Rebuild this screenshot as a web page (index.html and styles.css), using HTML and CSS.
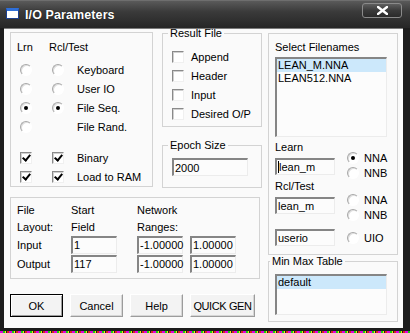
FILE: index.html
```html
<!DOCTYPE html>
<html lang="en">
<head>
    <meta charset="UTF-8">
    <title>I/O Parameters</title>
    <link rel="stylesheet" href="styles.css">
</head>
<body>
<div class="window">
    <div class="titlebar">
        <span class="app-icon"></span>
        <span class="title">I/O Parameters</span>
        <span class="close-btn">
            <svg width="11" height="9" viewBox="0 0 11 9"><path d="M1 1 L10 8 M10 1 L1 8" stroke="#fff" stroke-width="2.4" stroke-linecap="square"/></svg>
        </span>
    </div>

    <div class="client">
        <div class="left-col">
            <div class="top-area">
                <div class="group lrn-group">
                    <span>Lrn</span><span>Rcl/Test</span><span></span>

                    <span class="radio"></span><span class="radio"></span><span>Keyboard</span>
                    <span class="radio"></span><span class="radio"></span><span>User IO</span>
                    <span class="radio on"></span><span class="radio on"></span><span>File Seq.</span>
                    <span class="radio"></span><span></span><span>File Rand.</span>

                    <span class="spacer"></span>

                    <span class="check on"></span><span class="check on"></span><span>Binary</span>
                    <span class="check on"></span><span class="check on"></span><span>Load to RAM</span>
                </div>

                <div class="result-col">
                    <fieldset class="result-file">
                        <legend>Result File</legend>
                        <div class="opt"><span class="check"></span>Append</div>
                        <div class="opt"><span class="check"></span>Header</div>
                        <div class="opt"><span class="check"></span>Input</div>
                        <div class="opt"><span class="check"></span>Desired O/P</div>
                    </fieldset>
                    <fieldset class="epoch">
                        <legend>Epoch Size</legend>
                        <div class="field epoch-field">2000</div>
                    </fieldset>
                </div>
            </div>

            <div class="group layout-group">
                <span>File</span><span>Start</span><span>Network</span><span></span>
                <span>Layout:</span><span>Field</span><span>Ranges:</span><span></span>
                <span>Input</span>
                <div class="field">1</div>
                <div class="field">-1.00000</div>
                <div class="field">1.00000</div>
                <span>Output</span>
                <div class="field">117</div>
                <div class="field">-1.00000</div>
                <div class="field">1.00000</div>
            </div>

            <div class="buttons">
                <button class="btn default">OK</button>
                <button class="btn">Cancel</button>
                <button class="btn">Help</button>
                <button class="btn wide">QUICK GEN</button>
            </div>
        </div>

        <div class="right-col">
            <div class="group files-group">
                <div class="line">Select Filenames</div>
                <div class="listbox files-list">
                    <div class="item sel">LEAN_M.NNA</div>
                    <div class="item">LEAN512.NNA</div>
                </div>

                <div class="line pick-label">Learn</div>
                <div class="pick-row">
                    <div class="field name-field learn-field"><span class="caret"></span>lean_m</div>
                    <div class="pick-opts learn-opts">
                        <div class="pick"><span class="radio on"></span>NNA</div>
                        <div class="pick"><span class="radio"></span>NNB</div>
                    </div>
                </div>

                <div class="line">Rcl/Test</div>
                <div class="pick-row">
                    <div class="field name-field">lean_m</div>
                    <div class="pick-opts rcl-opts">
                        <div class="pick"><span class="radio"></span>NNA</div>
                        <div class="pick"><span class="radio"></span>NNB</div>
                    </div>
                </div>

                <div class="pick-row">
                    <div class="field name-field user-field">userio</div>
                    <div class="pick-opts uio-opts">
                        <div class="pick"><span class="radio"></span>UIO</div>
                    </div>
                </div>
            </div>

            <fieldset class="minmax">
                <legend>Min Max Table</legend>
                <div class="listbox minmax-list">
                    <div class="item sel">default</div>
                </div>
            </fieldset>
        </div>
    </div>
</div>
</body>
</html>
```

FILE: styles.css
```css
body {
    margin: 0;
    width: 410px;
    height: 333px;
    overflow: hidden;
    font-family: "Liberation Sans", Arial, sans-serif;
    font-size: 11px;
    color: #000;
    background: repeating-linear-gradient(90deg, #e000e0 0 3px, #10d010 3px 5px, #f0f000 5px 6px, #202020 6px 7px, #e02020 7px 9px);
}

.window {
    width: 410px;
    height: 331px;
    display: flex;
    flex-direction: column;
    background: #1c1c1c;
}

/* title bar */
.titlebar {
    height: 28px;
    flex: none;
    display: flex;
    align-items: flex-start;
    padding-left: 6px;
    box-sizing: border-box;
    background: linear-gradient(#5a5a5a, #3a3a3a 40%, #262626);
    border-top: 1px solid #6e6e6e;
}
.app-icon {
    width: 13px;
    height: 11px;
    margin-top: 7px;
    box-sizing: border-box;
    border: 1px solid #1b3f8f;
    border-top-width: 3px;
    border-top-color: #2f6fd8;
    background: #fff;
}
.title {
    margin: 7px 0 0 6px;
    color: #fff;
    font-weight: bold;
    font-size: 12.5px;
    letter-spacing: 0.1px;
    text-shadow: 0 0 1px #000;
}
.close-btn {
    margin: 2px 8px 0 auto;
    width: 40px;
    height: 15px;
    box-sizing: border-box;
    border: 1px solid #8a8a8a;
    border-radius: 3px;
    background: linear-gradient(#5e5e5e, #3a3a3a 50%, #2a2a2a);
    display: flex;
    align-items: center;
    justify-content: center;
}

/* client area */
.client {
    flex: 1;
    margin: 0 7px 3px 4px;
    padding-left: 6px;
    display: flex;
    gap: 6px;
    background: #fafafa;
    border-top: 1px solid #7a7a7a;
    box-sizing: border-box;
}
.left-col { width: 252px; }
.right-col { width: 130px; }

.group {
    border: 1px solid #d3d3d3;
}
fieldset {
    margin: 0;
    border: 1px solid #d3d3d3;
    min-width: 0;
}
legend {
    line-height: 12px;
    padding: 0 2px;
}

.top-area {
    display: flex;
    height: 159px;
}

/* Lrn / Rcl group */
.lrn-group {
    width: 143px;
    height: 155px;
    margin-top: 3px;
    box-sizing: border-box;
    padding-left: 6px;
    display: grid;
    grid-template-columns: 32px 28px 1fr;
    grid-template-rows: 27px repeat(4, 19px) 12px repeat(2, 19px);
    align-items: center;
}
.lrn-group .radio,
.lrn-group .check { margin-left: 3px; }
.lrn-group .spacer { grid-column: 1 / 4; }

.result-col {
    width: 100px;
    margin-left: 9px;
}
.result-file {
    margin-top: -2px;
    padding: 8px 0 3px 9px;
}
.result-file legend,
.epoch legend { margin-left: -4px; }
.opt {
    height: 19px;
    display: flex;
    align-items: center;
    gap: 7px;
}
.epoch {
    margin-top: 12px;
    padding: 7px 0 11px 9px;
}
.epoch-field { width: 76px; }

/* fields and lists */
.field {
    height: 18px;
    box-sizing: border-box;
    border-style: solid;
    border-width: 2px 1px 1px 2px;
    border-color: #858585 #ececec #ececec #858585;
    background: #fcfcfc;
    padding-left: 1px;
    display: flex;
    align-items: center;
    white-space: nowrap;
}
.caret {
    width: 1px;
    height: 12px;
    background: #000;
}
.listbox {
    box-sizing: border-box;
    border-style: solid;
    border-width: 2px 1px 1px 2px;
    border-color: #858585 #ececec #ececec #858585;
    background: #fcfcfc;
    width: 112px;
}
.item {
    height: 13px;
    line-height: 13px;
    padding-left: 1px;
}
.item.sel { background: #cce8fb; }

/* radios and checks */
.radio {
    width: 12px;
    height: 12px;
    box-sizing: border-box;
    border-radius: 50%;
    border: 1px solid;
    border-color: #a8a8a8 #fff #fff #a8a8a8;
    box-shadow: inset 1px 1px 0 #dedede;
    background: #fff;
    position: relative;
    flex: none;
}
.radio.on::after {
    content: "";
    position: absolute;
    left: 3px;
    top: 3px;
    width: 4px;
    height: 4px;
    border-radius: 50%;
    background: #000;
}
.check {
    width: 12px;
    height: 12px;
    box-sizing: border-box;
    border: 1px solid;
    border-color: #8a8a8a #f0f0f0 #f0f0f0 #8a8a8a;
    box-shadow: inset 1px 1px 0 #d0d0d0;
    background: #fff;
    position: relative;
    flex: none;
}
.check.on::after {
    content: "";
    position: absolute;
    left: 3px;
    top: 0;
    width: 3px;
    height: 6px;
    border: solid #000;
    border-width: 0 2px 2px 0;
    transform: rotate(40deg);
}

/* file layout group */
.layout-group {
    width: 250px;
    box-sizing: border-box;
    margin-top: 9px;
    padding: 3px 0 5px 6px;
    display: grid;
    grid-template-columns: 54px 66px 53px auto;
    grid-template-rows: 17px 17px 19px 19px;
    align-items: center;
}
.layout-group .field { width: 46px; }

/* buttons */
.buttons {
    display: flex;
    gap: 7px;
    margin-top: 15px;
}
.btn {
    width: 53px;
    height: 23px;
    padding: 0;
    box-sizing: border-box;
    font: inherit;
    color: #000;
    background: #f3f3f3;
    border: 1px solid;
    border-color: #fff #9c9c9c #9c9c9c #fff;
    box-shadow: inset -1px -1px 0 #d6d6d6;
    white-space: nowrap;
}
.btn.default {
    border-color: #000;
    box-shadow: inset 1px 1px 0 #fff, inset -1px -1px 0 #9c9c9c;
}
.btn.wide {
    width: 65px;
    letter-spacing: -0.4px;
}

/* filename group */
.files-group {
    margin-top: 4px;
    padding: 7px 0 8px 6px;
}
.line {
    height: 13px;
    line-height: 13px;
}
.files-list {
    height: 80px;
    margin-top: 3px;
}
.pick-label { margin-top: 4px; }
.pick-row {
    display: flex;
    align-items: flex-start;
}
.name-field {
    width: 60px;
    height: 17px;
    margin-top: 4px;
}
.user-field { margin-top: 7px; }
.pick-opts { margin-left: 12px; }
.learn-opts { margin-top: -4px; }
.rcl-opts { margin-top: -1px; }
.uio-opts { margin-top: 8px; }
.pick {
    height: 15px;
    display: flex;
    align-items: center;
    gap: 5px;
}

.minmax {
    padding: 7px 0 6px 6px;
}
.minmax legend { margin-left: -5px; }
.minmax-list { height: 41px; }
```
